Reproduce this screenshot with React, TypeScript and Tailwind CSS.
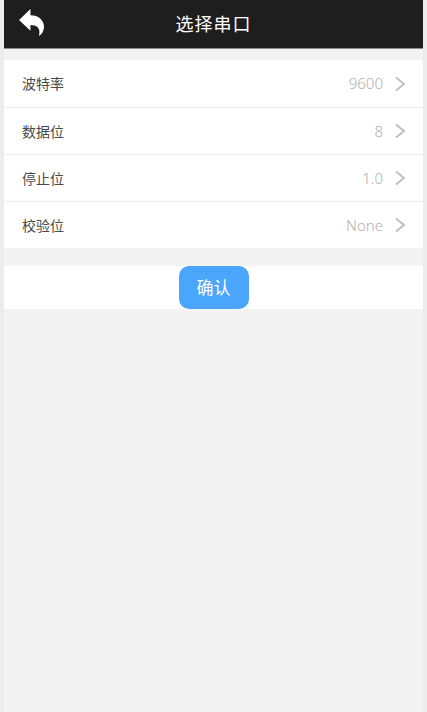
const rows = [
  { label: "波特率", value: "9600" },
  { label: "数据位", value: "8" },
  { label: "停止位", value: "1.0" },
  { label: "校验位", value: "None" },
];

function BackIcon() {
  return (
    <svg width="25" height="27" viewBox="0 0 24 26" fill="white">
      <path d="M0 10.5 L11 0 L11 6 C19 6 24.5 11 24 18 C23.6 22 21.5 24.5 19 26 C20.6 21 19.5 15.5 11 15.5 L11 21 Z" />
    </svg>
  );
}

function Chevron() {
  return (
    <svg width="12" height="16" viewBox="0 0 12 16" fill="none">
      <path d="M2 1.5 L10 8 L2 14.5" stroke="#bcbcbc" strokeWidth="1.8" />
    </svg>
  );
}

export default function App() {
  return (
    <div
      className="w-[427px] h-[712px] bg-[#ececec] px-[4px] overflow-hidden"
      style={{ fontFamily: '"Noto Sans", "Noto Sans CJK SC", sans-serif' }}
    >
      <div className="h-full bg-[#f3f3f3] flex flex-col">
        <header className="h-[49px] bg-[#1e1e1f] border-b border-[#8c8c8c] flex items-center relative shrink-0">
          <div className="absolute left-[15px] top-[9px]">
            <BackIcon />
          </div>
          <h1 className="w-full text-center text-white text-[18px] leading-none tracking-[1px]">
            选择串口
          </h1>
        </header>

        <div className="mt-[11px] bg-white">
          {rows.map((row, i) => (
            <div
              key={row.label}
              className={`h-[47px] flex items-center pl-[18px] pr-[17px] ${
                i > 0 ? "border-t border-[#ececec]" : ""
              }`}
            >
              <span className="text-[14px] text-[#4a4a4a]">{row.label}</span>
              <span className="ml-auto text-[15px] text-[#b0b0b0] font-light">
                {row.value}
              </span>
              <span className="ml-[11px] flex">
                <Chevron />
              </span>
            </div>
          ))}
        </div>

        <div className="mt-[18px] h-[43px] bg-white flex justify-center">
          <button className="w-[70px] h-[43px] rounded-[10px] bg-[#49a6fb] text-white text-[17px]">
            确认
          </button>
        </div>
      </div>
    </div>
  );
}
